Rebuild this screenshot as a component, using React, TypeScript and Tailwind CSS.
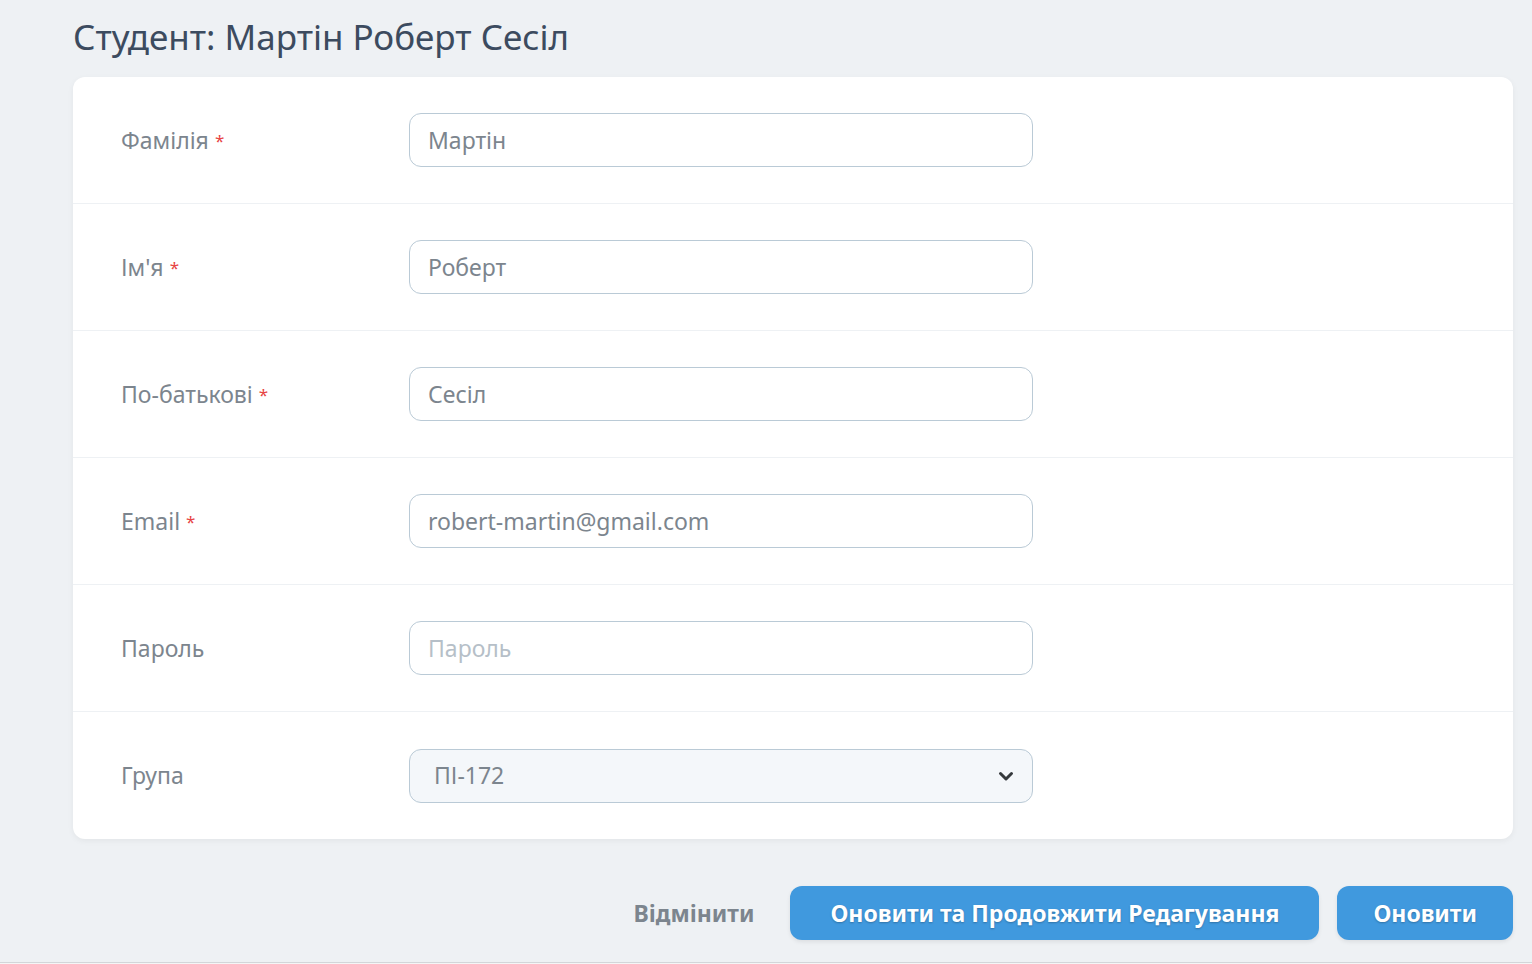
const font = { fontFamily: '"Noto Sans", "Open Sans", sans-serif' }

type Field = {
  label: string
  value?: string
  placeholder?: string
  required?: boolean
  select?: boolean
}

const fields: Field[] = [
  { label: "Фамілія", value: "Мартін", required: true },
  { label: "Ім'я", value: "Роберт", required: true },
  { label: "По-батькові", value: "Сесіл", required: true },
  { label: "Email", value: "robert-martin@gmail.com", required: true },
  { label: "Пароль", placeholder: "Пароль" },
  { label: "Група", value: "ПІ-172", select: true },
]

const Row = ({ field, last }: { field: Field; last: boolean }) => {
  return (
    <div className={`flex items-center h-[127px] ${last ? "" : "border-b border-[#eef1f4]"}`}>
      {/* label column */}
      <div className="w-1/5 px-12 text-[23px] leading-none text-[#7c858e] flex items-center">
        <span>{field.label}</span>
        {field.required && <span className="text-[#e74444] text-[17px] ml-1.5">*</span>}
      </div>

      {/* input column */}
      <div className="w-1/2 px-12">
        {field.select ? (
          <div className="h-[54px] w-full rounded-xl border border-[#bacad6] bg-[#f4f7fa] flex items-center justify-between pl-6 pr-4 text-[23px] text-[#7c858e]">
            <span>{field.value}</span>
            <svg width="20" height="20" viewBox="0 0 20 20" fill="none">
              <path d="M4.5 7.5 10 13l5.5-5.5" stroke="#35393c" strokeWidth="3" strokeLinecap="round" strokeLinejoin="round" />
            </svg>
          </div>
        ) : (
          <div className="h-[54px] w-full rounded-xl border border-[#bacad6] bg-white flex items-center px-[18px] text-[23px]">
            {field.value ? (
              <span className="text-[#7c858e]">{field.value}</span>
            ) : (
              <span className="text-[#b6bfc8]">{field.placeholder}</span>
            )}
          </div>
        )}
      </div>
    </div>
  )
}

const App = () => {
  return (
    <div className="w-[1532px] h-[964px] bg-[#eef1f4] flex flex-col overflow-hidden" style={font}>
      <div className="flex-1 pl-[73px] pr-[19px] pt-[10px]">
        <h1 className="text-[35px] leading-[54px] text-[#3c4b5f] mb-[13px]">Студент: Мартін Роберт Сесіл</h1>

        <div className="bg-white rounded-xl shadow-[0_2px_6px_rgba(0,0,0,0.05)]">
          {fields.map((f, i) => (
            <Row key={f.label} field={f} last={i === fields.length - 1} />
          ))}
        </div>

        {/* actions */}
        <div className="flex items-center justify-end mt-[47px]">
          <button className="text-[23px] font-bold text-[#7c858e] mr-9">Відмінити</button>
          <button className="h-[54px] px-10 rounded-xl bg-[#4099de] text-white text-[23px] font-bold shadow-[0_2px_4px_rgba(0,0,0,0.08)] [text-shadow:0_1px_2px_rgba(0,0,0,0.25)] mr-[18px]">
            Оновити та Продовжити Редагування
          </button>
          <button className="h-[54px] px-9 rounded-xl bg-[#4099de] text-white text-[23px] font-bold shadow-[0_2px_4px_rgba(0,0,0,0.08)] [text-shadow:0_1px_2px_rgba(0,0,0,0.25)]">
            Оновити
          </button>
        </div>
      </div>
      <div className="h-[2px] border-t border-[#d3d6d9] bg-[#f4f5f6]" />
    </div>
  )
}

export default App
